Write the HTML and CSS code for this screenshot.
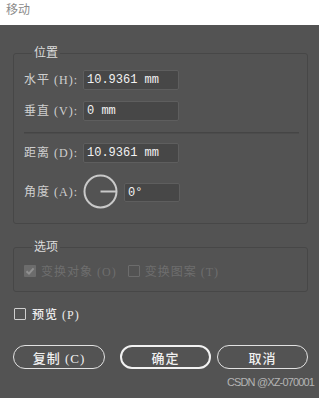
FILE: index.html
```html
<!DOCTYPE html>
<html lang="zh-CN">
<head>
<meta charset="utf-8">
<title>移动</title>
<link rel="stylesheet" href="styles.css">
</head>
<body>
<div class="titlebar">移动</div>
<div class="content">
  <fieldset class="group group-pos">
    <legend class="legend">位置</legend>
    <div class="rows">
      <div class="row">
        <span class="label">水平 (H):</span>
        <span class="input input-wide">10.9361 mm</span>
      </div>
      <div class="row">
        <span class="label">垂直 (V):</span>
        <span class="input input-wide">0 mm</span>
      </div>
      <div class="sep"></div>
      <div class="row">
        <span class="label">距离 (D):</span>
        <span class="input input-wide">10.9361 mm</span>
      </div>
      <div class="row row-angle">
        <span class="label">角度 (A):</span>
        <svg class="dial" width="35" height="35" viewBox="0 0 35 35">
          <circle cx="17.5" cy="17.5" r="16" fill="none" stroke="#c9c9c9" stroke-width="2"/>
          <line x1="17.5" y1="17.5" x2="33" y2="17.5" stroke="#c9c9c9" stroke-width="2"/>
        </svg>
        <span class="input input-small">0°</span>
      </div>
    </div>
  </fieldset>

  <fieldset class="group group-opt">
    <legend class="legend">选项</legend>
    <div class="checks">
      <span class="check disabled">
        <span class="box box-checked">
          <svg width="12" height="12" viewBox="0 0 12 12"><path d="M2.5 6.2 L5 8.6 L9.6 3.4" fill="none" stroke="#909090" stroke-width="2"/></svg>
        </span>
        <span class="ctext">变换对象 (O)</span>
      </span>
      <span class="check disabled check-second">
        <span class="box box-off"></span>
        <span class="ctext">变换图案 (T)</span>
      </span>
    </div>
  </fieldset>

  <div class="preview">
    <span class="box box-preview"></span>
    <span class="ptext">预览 (P)</span>
  </div>

  <div class="buttons">
    <span class="btn">复制 (C)</span>
    <span class="btn btn-default">确定</span>
    <span class="btn btn-cancel">取消</span>
  </div>

  <div class="watermark">CSDN @XZ-070001</div>
</div>
</body>
</html>
```

FILE: styles.css
```css
html, body {
  margin: 0;
  padding: 0;
}
body {
  width: 319px;
  height: 398px;
  overflow: hidden;
  background: #535353;
  font-family: "Liberation Serif", "Noto Sans CJK SC", serif;
  font-size: 12px;
  color: #d2d2d2;
}
.titlebar {
  height: 25px;
  box-sizing: border-box;
  background: #ffffff;
  color: #8a8a8a;
  padding: 3px 0 0 6px;
  line-height: 14px;
  font-size: 12px;
}
.content {
  padding: 0 11px 0 13px;
}
.group {
  margin: 0;
  border: 1px solid #474747;
  border-radius: 3px;
  min-width: 0;
}
.group-pos {
  margin-top: 21px;
  padding: 10px 8px 14px 10px;
}
.group-opt {
  margin-top: 16px;
  padding: 10px 8px 13px 10px;
}
.legend {
  margin-left: 8px;
  padding: 0 2px;
  line-height: 14px;
  font-size: 12px;
  color: #dcdcdc;
}
.rows {
  display: flex;
  flex-direction: column;
  gap: 11px;
}
.row {
  display: flex;
  align-items: center;
  height: 20px;
}
.row-angle {
  height: 35px;
}
.label {
  width: 59px;
  flex: none;
  white-space: nowrap;
  color: #cfcfcf;
  line-height: 14px;
  letter-spacing: 1px;
}
.input {
  box-sizing: border-box;
  background: #474747;
  border: 1px solid #5e5e5e;
  border-radius: 2px;
  color: #f2f2f2;
  font-family: "Liberation Mono", "DejaVu Sans Mono", monospace;
  font-size: 12px;
  line-height: 16px;
  padding: 1px 4px 0 3px;
  white-space: nowrap;
}
.input-wide {
  width: 96px;
  height: 20px;
}
.input-small {
  width: 56px;
  height: 19px;
  margin-left: 6px;
  margin-top: 1px;
}
.dial {
  display: block;
  flex: none;
}
.sep {
  height: 0;
  border-top: 1px solid #454545;
  border-bottom: 1px solid #4c4c4c;
  margin-bottom: -2px;
}
.checks {
  display: flex;
  align-items: center;
  height: 14px;
}
.check {
  display: flex;
  align-items: center;
  gap: 5px;
}
.check-second {
  margin-left: 11px;
}
.ctext {
  letter-spacing: 1px;
  white-space: nowrap;
}
.disabled .ctext {
  color: #6e6e6e;
}
.box {
  display: block;
  box-sizing: border-box;
  width: 12px;
  height: 12px;
  flex: none;
  border-radius: 1px;
}
.box svg {
  display: block;
}
.box-checked {
  background: #6c6c6c;
}
.box-off {
  border: 1px solid #6c6c6c;
}
.preview {
  display: flex;
  align-items: center;
  gap: 6px;
  height: 14px;
  margin-top: 15px;
  padding-left: 1px;
}
.box-preview {
  border: 1px solid #cfcfcf;
}
.ptext {
  color: #ececec;
  font-weight: 500;
  letter-spacing: 1px;
}
.buttons {
  display: flex;
  margin-top: 24px;
}
.btn {
  box-sizing: border-box;
  width: 92px;
  height: 24px;
  border: 1.5px solid #e2e2e2;
  border-radius: 12px;
  display: flex;
  align-items: center;
  justify-content: center;
  color: #f0f0f0;
  font-size: 13px;
  font-weight: 500;
  letter-spacing: 1px;
}
.btn-default {
  width: 91px;
  margin-left: 15px;
  border: 2px solid #f2f2f2;
}
.btn-cancel {
  width: 91px;
  margin-left: 6px;
}
.watermark {
  margin-top: 7px;
  margin-right: -6px;
  text-align: right;
  font-family: "Liberation Sans", Arial, sans-serif;
  font-size: 11px;
  letter-spacing: -0.85px;
  line-height: 13px;
  color: #b4b4b4;
}
```
